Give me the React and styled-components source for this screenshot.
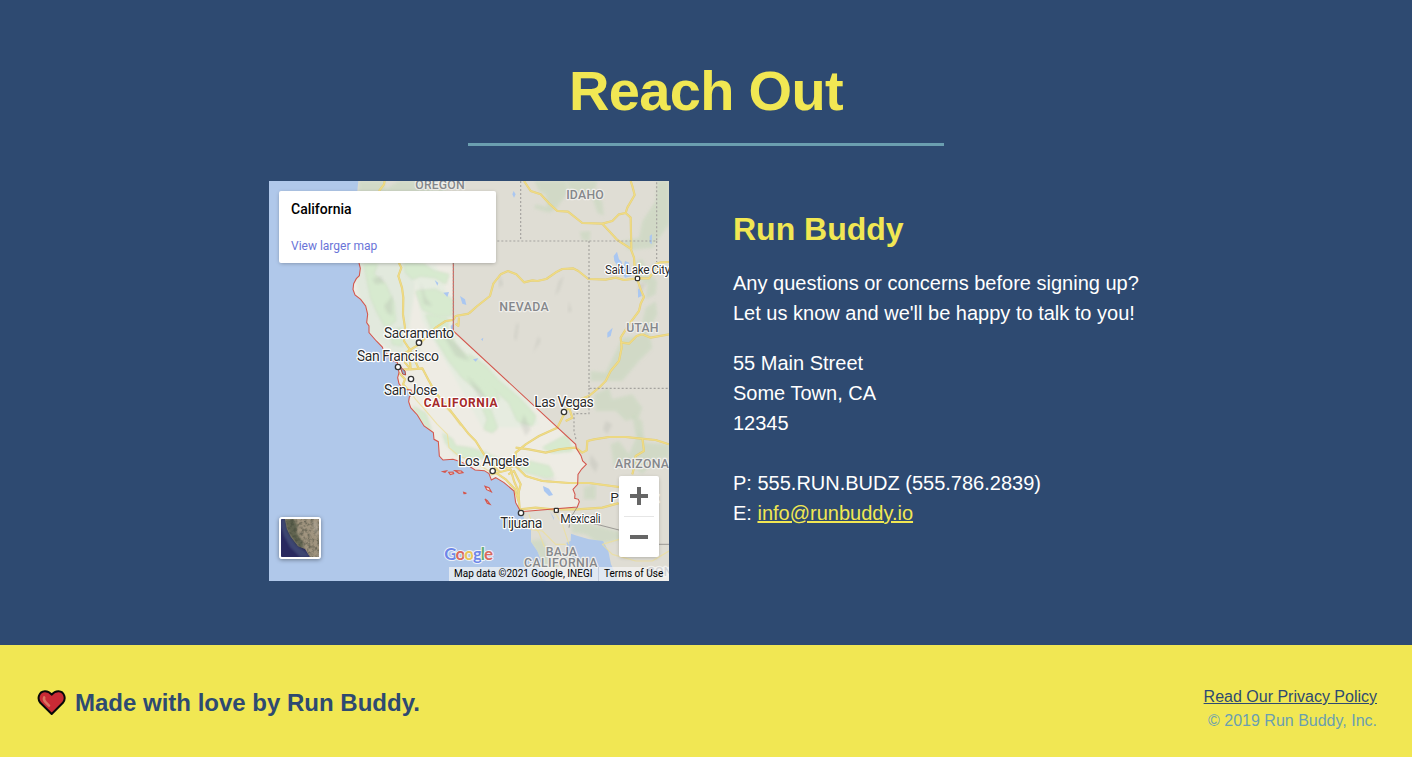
import React from "react";
import styled, { createGlobalStyle } from "styled-components";

const GlobalStyle = createGlobalStyle`
  * { box-sizing: border-box; margin: 0; padding: 0; }
  body { font-family: "Liberation Sans", Arial, Helvetica, sans-serif; background: #2e4a71; }
`;

const Contact = styled.section`
  height: 645px;
  padding-top: 58px;
  background: #2e4a71;
  display: flex;
  flex-direction: column;
  align-items: center;
`;

const SectionTitle = styled.h2`
  width: 476px;
  height: 88px;
  font-size: 56px;
  line-height: 65px;
  letter-spacing: -0.7px;
  text-align: center;
  color: #f1e753;
  border-bottom: 3px solid #6b9fb0;
`;

const ContactBody = styled.div`
  width: 874px;
  margin-top: 35px;
  display: flex;
  gap: 64px;
`;

const MapFrame = styled.div`
  position: relative;
  width: 400px;
  height: 400px;
  flex: none;
  overflow: hidden;
  font-family: Roboto, sans-serif;
`;

const MapDrawing = styled.svg`
  display: block;
  width: 400px;
  height: 400px;
`;

const PlaceCard = styled.div`
  position: absolute;
  left: 10px;
  top: 10px;
  width: 217px;
  height: 72px;
  padding: 10px 12px;
  background: #fff;
  border-radius: 2px;
  box-shadow: 0 1px 4px -1px rgba(0, 0, 0, 0.35);
`;

const PlaceName = styled.div`
  font-size: 14px;
  line-height: 16px;
  font-weight: 500;
  color: #000;
`;

const PlaceLink = styled.a`
  display: block;
  margin-top: 21px;
  font-size: 12px;
  line-height: 16px;
  color: #6a74d8;
`;

const SatelliteToggle = styled.div`
  position: absolute;
  left: 10px;
  bottom: 22px;
  width: 42px;
  height: 42px;
  border: 2px solid #fff;
  border-radius: 3px;
  overflow: hidden;
  box-shadow: 0 1px 4px rgba(0, 0, 0, 0.4);
  svg { display: block; width: 38px; height: 38px; }
`;

const ZoomControls = styled.div`
  position: absolute;
  right: 10px;
  bottom: 24px;
  width: 40px;
  height: 81px;
  background: #fff;
  border-radius: 2px;
  box-shadow: 0 1px 4px -1px rgba(0, 0, 0, 0.3);
`;

const ZoomButton = styled.div`
  height: 40px;
  display: flex;
  align-items: center;
  justify-content: center;
`;

const ZoomDivider = styled.div`
  height: 1px;
  margin: 0 5px;
  background: #e6e6e6;
`;

const Attribution = styled.div`
  position: absolute;
  right: 0;
  bottom: 0;
  height: 14px;
  display: flex;
  font-size: 10px;
  line-height: 14px;
  color: #000;
  white-space: nowrap;
`;

const AttributionItem = styled.span`
  width: ${(p) => p.$width}px;
  padding-left: 5px;
  background: rgba(245, 245, 245, 0.7);
  border-left: ${(p) => (p.$divided ? "1px solid #c3ccdc" : "0")};
`;

const Info = styled.div`
  padding-top: 29px;
  color: #fff;
  font-size: 20px;
  line-height: 30px;
  white-space: nowrap;
`;

const InfoTitle = styled.h3`
  font-size: 32px;
  line-height: 38px;
  margin-bottom: 20px;
  color: #f1e753;
`;

const Paragraph = styled.p`
  margin-bottom: 20px;
`;

const EmailLink = styled.a`
  color: #f1e753;
  text-decoration: underline;
`;

const Footer = styled.footer`
  height: 112px;
  padding: 0 35px 0 37px;
  background: #f1e753;
  display: flex;
  align-items: center;
  justify-content: space-between;
`;

const MadeWith = styled.h2`
  display: flex;
  align-items: center;
  gap: 9px;
  padding-top: 3px;
  font-size: 24px;
  line-height: 30px;
  color: #2e4a71;
`;

const Legal = styled.div`
  padding-top: 16px;
  font-size: 16px;
  line-height: 24px;
  text-align: right;
  color: #6b9fb0;
`;

const PolicyLink = styled.a`
  color: #2e4a71;
  text-decoration: underline;
`;

const coast =
  "M268 0L262 60L266 220L270 246L274 262L271 284L262 293L254 308L252 325L258 342L275 355L290 375L296 400L293 425L300 435L300 455L322 480L340 498L345 513L357 520L362 534L385 545L390 575L386 590L390 608L402 625L426 627L430 637L421 648L419 662L425 680L445 702L465 735L493 755L495 775L508 782L511 825L522 837L552 835L575 842L600 855L618 867L646 869L660 878L667 897L680 890L705 905L735 930L740 965L755 992";
const stateEast =
  "L925 978L931 962L928 955L917 952L918 940L912 925L926 910L927 880L938 864L952 850L941 840L936 824L922 802L920 790L553 450L553 246";
const caStroke = coast.replace("M268 0L262 60L266 220L270 246", "M270 246") + stateEast;
const land = coast + "L768 1016L786 1046L786 1082L805 1110L815 1135L822 1165L830 1200L1200 1200L1200 0Z";

const greens = [
  "M270 0L342 0L350 25L390 0L520 0L530 35L270 35Z",
  "M800 70L835 78L830 42L810 30L795 0L890 0L900 30L860 85L840 95L795 82Z",
  "M890 0L985 0L975 40L1000 60L1005 105L985 95L970 50L940 35L905 30Z",
  "M932 152L965 150L962 180L940 178Z",
  "M1060 180L1110 170L1120 120L1160 60L1165 0L1200 0L1200 130L1150 200L1080 208Z",
  "M1100 240L1120 235L1140 280L1165 300L1160 340L1130 355L1135 310L1105 295Z",
  "M965 570L1010 575L1060 470L1110 465L1130 380L1160 360L1165 400L1140 450L1150 500L1110 540L1060 600L965 600Z",
  "M285 250L325 248L315 280L350 310L375 365L380 420L350 440L325 395L305 350Z",
  "M405 246L465 250L495 270L540 280L530 310L500 290L455 285L430 295L410 275Z",
  "M440 330L500 325L550 355L548 405L500 405L460 385Z",
  "M365 450L400 440L400 495L370 490Z",
  "M470 400L535 410L535 445L565 500L640 560L680 620L690 655L665 680L640 640L580 590L540 540L500 475Z",
  "M640 680L665 685L685 740L670 755L645 745L655 715Z",
  "M600 520L650 555L690 600L750 650L800 705L790 735L745 720L720 665L670 620L610 575Z",
  "M430 675L470 697L488 752L470 739L448 705Z",
  "M520 755L550 775L560 795L600 800L650 815L690 835L720 845L700 860L650 830L600 835L560 820L530 785Z",
  "M740 855L755 835L840 855L855 885L835 890L770 875Z",
  "M820 800L895 760L910 810L850 815Z",
  "M945 920L980 910L980 955L945 955Z",
  "M1025 790L1050 780L1080 820L1110 750L1130 785L1200 790L1200 830L1160 835L1120 880L1080 850L1035 860Z",
  "M975 640L1020 620L1030 655L1090 640L1120 680L1110 710L1070 720L1040 690L980 690Z",
  "M1090 700L1120 720L1125 770L1100 765Z",
  "M905 1010L960 1030L1050 1052L1060 1075L990 1090L950 1060L910 1055Z",
  "M780 1080L820 1075L840 1110L870 1160L830 1160Z",
];

const roads = [
  "M330 30L345 10L347 0",
  "M390 246L397 260L388 285L399 320L403 350L402 400L408 440L405 480L425 510L450 565",
  "M600 397L625 375L663 345L673 308L695 280L717 270L742 280L765 304L790 298L805 300L832 294L864 272L880 264L912 262L928 270L958 294L1010 296L1040 290L1065 297L1105 292L1140 292L1150 278L1160 250L1175 244L1200 243",
  "M765 0L785 30L815 40L840 67L865 90L897 92L940 126L1000 128L1030 120L1050 100L1070 96L1075 80L1097 42L1090 15L1085 0",
  "M1000 128L1045 177L1085 203L1095 230L1097 260L1105 295L1115 325L1125 348L1115 368L1110 390L1080 430L1055 470L1058 500L1050 540L1025 570L1010 600L990 620L960 645L920 660L890 690L865 740L810 765L770 790L740 815L740 855",
  "M1070 96L1085 110L1087 205",
  "M1055 484L1080 488L1103 465L1120 460L1145 470L1200 460",
  "M450 490L500 440L530 420L553 417L560 405L600 398",
  "M570 410L568 435L560 428",
  "M402 565L425 565L420 500M450 490L410 515L408 545L425 565L460 562L480 600L500 635L545 690L600 760L620 780L645 820L665 845L690 870",
  "M390 575L408 595L402 610L425 635",
  "M670 870L710 860L740 855L770 885L820 900L900 906L960 906L1050 918",
  "M740 800L780 805L830 815L870 805L895 802L920 800L940 815L953 808L955 780L975 775L1020 768L1070 768L1110 772L1160 777L1200 790",
  "M665 880L725 865L735 900L748 930L752 985L800 980L850 985L925 985L1000 980L1055 965",
  "M1120 772L1125 810L1100 825L1095 860L1090 880",
  "M900 680L910 710L890 720",
  "M680 875L710 895L738 925L750 965M718 880L735 870L755 910L745 950",
];

const minorRoads = [
  "M425 635L440 655L475 695L505 730L535 760L540 800L570 825L610 840L660 870",
  "M480 600L505 655L550 700L575 735",
  "M780 1000L790 1030L810 1055L825 1095L850 1110L860 1160",
  "M855 990L880 1030L890 1060L900 1090",
  "M1050 1075L1000 1090L1030 1120L1100 1140L1150 1140L1200 1110",
  "M780 1045L820 1050L860 1090L890 1090",
];

const lakes = [
  "M1034 225L1044 212L1050 235L1058 242L1062 265L1052 265L1036 240Z",
  "M1068 240L1080 245L1088 285L1068 290L1060 275Z",
  "M1107 325L1115 320L1118 345L1107 350Z",
  "M573 345L588 355L592 372L580 368Z",
  "M523 335L540 333L535 348Z",
  "M822 915L840 923L852 942L840 945L825 930Z",
  "M1015 455L1031 440L1025 465L1015 470Z",
  "M497 297L508 306L505 314Z",
  "M1142 165L1149 160L1148 190L1142 185Z",
  "M545 435L553 428L555 450L547 447Z",
  "M734 30L740 40L735 50L730 40Z",
  "M612 535L628 532L620 542Z",
  "M636 475L643 470L641 480Z",
];

const hills = [
  "M310 295L335 285L345 305L320 310Z", "M345 375L370 345L370 405L355 395Z", "M455 305L470 350L490 375L465 370Z",
  "M515 450L570 495L600 540L560 525Z", "M870 300L885 285L870 330L858 345Z", "M742 430L750 425L742 480L735 470Z",
  "M808 465L815 480L792 515L802 485Z", "M900 360L908 390L897 395Z", "M690 280L703 310L690 320Z",
  "M595 585L630 620L660 665L630 650Z", "M795 885L835 895L865 890L840 905Z", "M1110 310L1130 305L1120 330L1105 335Z",
  "M965 820L988 850L980 875L962 850Z", "M1010 720L1030 730L1015 760L1002 745Z", "M765 700L785 745L770 765L755 730Z",
];

const places = [
  { name: "Sacramento", x: 450, y: 471, w: 210, dot: [450, 485] },
  { name: "San Francisco", x: 387, y: 540, w: 246, dot: [387, 558] },
  { name: "San Jose", x: 425, y: 642, w: 160, dot: [426, 594] },
  { name: "Las Vegas", x: 885, y: 678, w: 178, dot: [885, 693] },
  { name: "Los Angeles", x: 674, y: 855, w: 214, dot: [671, 870] },
  { name: "Tijuana", x: 757, y: 1041, w: 126, dot: [756, 996] },
];

const regions = [
  { name: "OREGON", x: 513, y: 24, w: 148 },
  { name: "IDAHO", x: 948, y: 54, w: 113 },
  { name: "NEVADA", x: 765, y: 390, w: 148 },
  { name: "UTAH", x: 1120, y: 453, w: 97 },
  { name: "ARIZONA", x: 1119, y: 861, w: 162 },
  { name: "BAJA", x: 877, y: 1125, w: 93 },
  { name: "CALIFORNIA", x: 875, y: 1158, w: 220 },
  { name: "SONORA", x: 1210, y: 1186, w: 150 },
];

const Label = styled.text`
  font-family: Roboto, sans-serif;
  font-size: ${(p) => p.$size}px;
  font-weight: ${(p) => p.$weight || 400};
  fill: ${(p) => p.$color};
  stroke: ${(p) => p.$halo || "#fff"};
  stroke-width: 7px;
  stroke-linejoin: round;
  paint-order: stroke;
`;

function StateMap() {
  return (
    <MapDrawing viewBox="0 0 1200 1200">
      <defs>
        <clipPath id="state"><path d={caStroke + "Z"} /></clipPath>
        <clipPath id="land"><path d={land} /></clipPath>
        <filter id="soft" x="-10%" y="-10%" width="120%" height="120%"><feGaussianBlur stdDeviation="4" /></filter>
      </defs>
      <rect width="1200" height="1200" fill="#b0c8ea" />
      <path d={land} fill="#dfddd4" />
      <g clipPath="url(#land)">
        <path d={caStroke + "Z"} fill="#eeece4" />
        <g clipPath="url(#state)">
          <path d="M250 240H450L420 440L470 540L430 560L290 450Z" fill="#e2e9dd" filter="url(#soft)" />
          <path d="M430 250H500L560 400L760 620L810 730L740 740L640 740L540 560L460 420Z" fill="#e6ece0" filter="url(#soft)" />
        </g>
        {greens.map((d) => <path key={d} d={d} fill="#c8d8be" opacity="0.6" filter="url(#soft)" />)}
        <g clipPath="url(#state)">
          {greens.map((d) => <path key={d} d={d} fill="#d7eacf" filter="url(#soft)" />)}
        </g>
        {hills.map((d) => <path key={d} d={d} fill="#a7aaa2" opacity="0.24" filter="url(#soft)" />)}
        <path d="M906 1058L924 1064L960 1075L1002 1080L1018 1110L1026 1150L1050 1200L960 1200L925 1150L900 1110L892 1085L905 1080Z" fill="#b0c8ea" />
        <path d="M842 990L855 1010L855 1018Z" fill="#b0c8ea" />
        {lakes.map((d) => <path key={d} d={d} fill="#aac7f1" />)}
        <g fill="none" strokeLinejoin="round">
          {minorRoads.map((d) => <path key={d} d={d} stroke="#ecdf9c" strokeWidth="3.5" opacity="0.8" />)}
          {roads.map((d) => <path key={d} d={d} stroke="#e0ce7c" strokeWidth="6.5" />)}
          {roads.map((d) => <path key={d} d={d} stroke="#f0db84" strokeWidth="4" />)}
        </g>
      </g>
      <path d="M755 0V180M553 180H1163V0M1163 180V243M960 180V622H1200M960 622V698H915V750L922 780" fill="none" stroke="#a5a39f" strokeWidth="3.5" strokeDasharray="6 6" />
      <path d="M925 978L905 1010L1050 1047M1170 1090H1200M905 1010L900 1040" fill="none" stroke="#8e8c88" strokeWidth="2.5" />
      <path d={caStroke} fill="none" stroke="#d3564d" strokeWidth="3.2" />
      <path d="M553 246V450" stroke="#a08d8a" strokeWidth="3" strokeDasharray="5 5" />
      <g fill="#f3dcd4" stroke="#d3564d" strokeWidth="3.5">
        <path d="M522 872L532 870L528 874Z" /><path d="M539 874L552 873L554 878L544 881Z" />
        <path d="M558 869L577 870L582 875L570 877Z" /><path d="M584 934L592 937L585 938Z" />
        <path d="M648 916L660 920L667 932L653 926Z" /><path d="M648 954L655 959L663 970L655 967Z" />
      </g>
      <path d="M391 550L400 564L408 570L410 582L401 579Z" fill="#90a9c9" stroke="#b74940" strokeWidth="3" />
      {regions.map((r) => (
        <Label key={r.name + r.x} $size={37} $weight={500} $color="#85878b" $halo="#efeeea" x={r.x} y={r.y} textAnchor="middle" textLength={r.w}>{r.name}</Label>
      ))}
      <Label $size={36} $weight={700} $color="#a52a2a" x={575} y={678} textAnchor="middle" textLength={222}>CALIFORNIA</Label>
      {places.map((p) => (
        <g key={p.name}>
          <Label $size={42} $color="#2b2b2b" x={p.x} y={p.y} textAnchor="middle" textLength={p.w}>{p.name}</Label>
          <circle cx={p.dot[0]} cy={p.dot[1]} r="8" fill="#fff" stroke="#333" strokeWidth="4" />
        </g>
      ))}
      <Label $size={36} $color="#2b2b2b" x={1008} y={279} textLength={196}>Salt Lake City</Label>
      <rect x="1099" y="286" width="13" height="13" rx="4" fill="#fff" stroke="#333" strokeWidth="4" />
      <Label $size={36} $color="#2b2b2b" x={874} y={1026} textLength={121}>Mexicali</Label>
      <rect x="856" y="982" width="12" height="12" rx="2" fill="#fff" stroke="#333" strokeWidth="4" />
      <Label $size={41} $color="#2b2b2b" x={1024} y={964}>Phoenix</Label>
      <text x="526" y="1138" textLength="146" fontFamily="Lato, sans-serif" fontSize="51" fontWeight="700" stroke="#fff" strokeOpacity="0.75" strokeWidth="6" strokeLinejoin="round" paintOrder="stroke">
        <tspan fill="#6e86e8">G</tspan><tspan fill="#d9695f">o</tspan><tspan fill="#e9c65a">o</tspan><tspan fill="#6e86e8">g</tspan><tspan fill="#63ad76">l</tspan><tspan fill="#d9695f">e</tspan>
      </text>
    </MapDrawing>
  );
}

function SatelliteThumb() {
  return (
    <svg viewBox="0 0 38 38">
      <defs>
        <filter id="terrain" x="0" y="0" width="100%" height="100%">
          <feTurbulence type="fractalNoise" baseFrequency="0.3" numOctaves="3" seed="4" />
          <feColorMatrix values="0 0 0 0 0.15  0 0 0 0 0.14  0 0 0 0 0.1  2.8 0 0 0 -1.1" />
          <feComposite in2="SourceGraphic" operator="in" result="grain" />
          <feMerge><feMergeNode in="SourceGraphic" /><feMergeNode in="grain" /></feMerge>
        </filter>
        <filter id="haze"><feGaussianBlur stdDeviation="0.8" /></filter>
      </defs>
      <rect width="38" height="38" fill="#29295f" />
      <path d="M0 0H5L8 14L16 26L25 33L30 38H19L9 28L3 17L0 8Z" fill="#46527a" opacity="0.7" filter="url(#haze)" />
      <path d="M4 0L6 10L10 18L17 27L24 30L29 38H38V0Z" fill="#a0947f" filter="url(#terrain)" />
      <path d="M4 0H13L17 7L15 12L22 24L23 30L17 27L10 18L6 10Z" fill="#414c39" opacity="0.65" filter="url(#haze)" />
      <path d="M31 2L37 4V19L33 12Z" fill="#c2b9ac" opacity="0.4" filter="url(#haze)" />
    </svg>
  );
}

function Heart() {
  return (
    <svg width="29" height="27" viewBox="0 0 29 27">
      <path d="M14.7 25L3.3 13.8C-.2 9.7 2 2.4 7.8 2.2C11 2.1 13.2 3.7 14.7 5.6C16.2 3.7 18.4 2.1 21.6 2.2C27.3 2.4 29.4 9.7 25.9 13.8Z" fill="#c92a35" stroke="#080808" strokeWidth="2" strokeLinejoin="round" />
      <path d="M7.2 8.4C6.6 9.8 7.2 11.6 8.6 13.2L12 16.6" fill="none" stroke="#db7360" strokeWidth="2.6" strokeLinecap="round" />
    </svg>
  );
}

export default function App() {
  return (
    <>
      <GlobalStyle />
      <Contact>
        <SectionTitle>Reach Out</SectionTitle>
        <ContactBody>
          <MapFrame>
            <StateMap />
            <PlaceCard>
              <PlaceName>California</PlaceName>
              <PlaceLink>View larger map</PlaceLink>
            </PlaceCard>
            <SatelliteToggle><SatelliteThumb /></SatelliteToggle>
            <ZoomControls>
              <ZoomButton>
                <svg width="18" height="18"><path d="M7 0h4v7h7v4h-7v7H7v-7H0V7h7z" fill="#666" /></svg>
              </ZoomButton>
              <ZoomDivider />
              <ZoomButton>
                <svg width="18" height="4"><path d="M0 0h18v4H0z" fill="#666" /></svg>
              </ZoomButton>
            </ZoomControls>
            <Attribution>
              <AttributionItem $width={149}>Map data ©2021 Google, INEGI</AttributionItem>
              <AttributionItem $width={71} $divided>Terms of Use</AttributionItem>
            </Attribution>
          </MapFrame>
          <Info>
            <InfoTitle>Run Buddy</InfoTitle>
            <Paragraph>
              Any questions or concerns before signing up?<br />
              Let us know and we'll be happy to talk to you!
            </Paragraph>
            <Paragraph>
              55 Main Street<br />
              Some Town, CA<br />
              12345<br />
              <br />
              P: 555.RUN.BUDZ (555.786.2839)<br />
              E: <EmailLink>info@runbuddy.io</EmailLink>
            </Paragraph>
          </Info>
        </ContactBody>
      </Contact>
      <Footer>
        <MadeWith><Heart />Made with love by Run Buddy.</MadeWith>
        <Legal>
          <PolicyLink>Read Our Privacy Policy</PolicyLink><br />
          © 2019 Run Buddy, Inc.
        </Legal>
      </Footer>
    </>
  );
}
